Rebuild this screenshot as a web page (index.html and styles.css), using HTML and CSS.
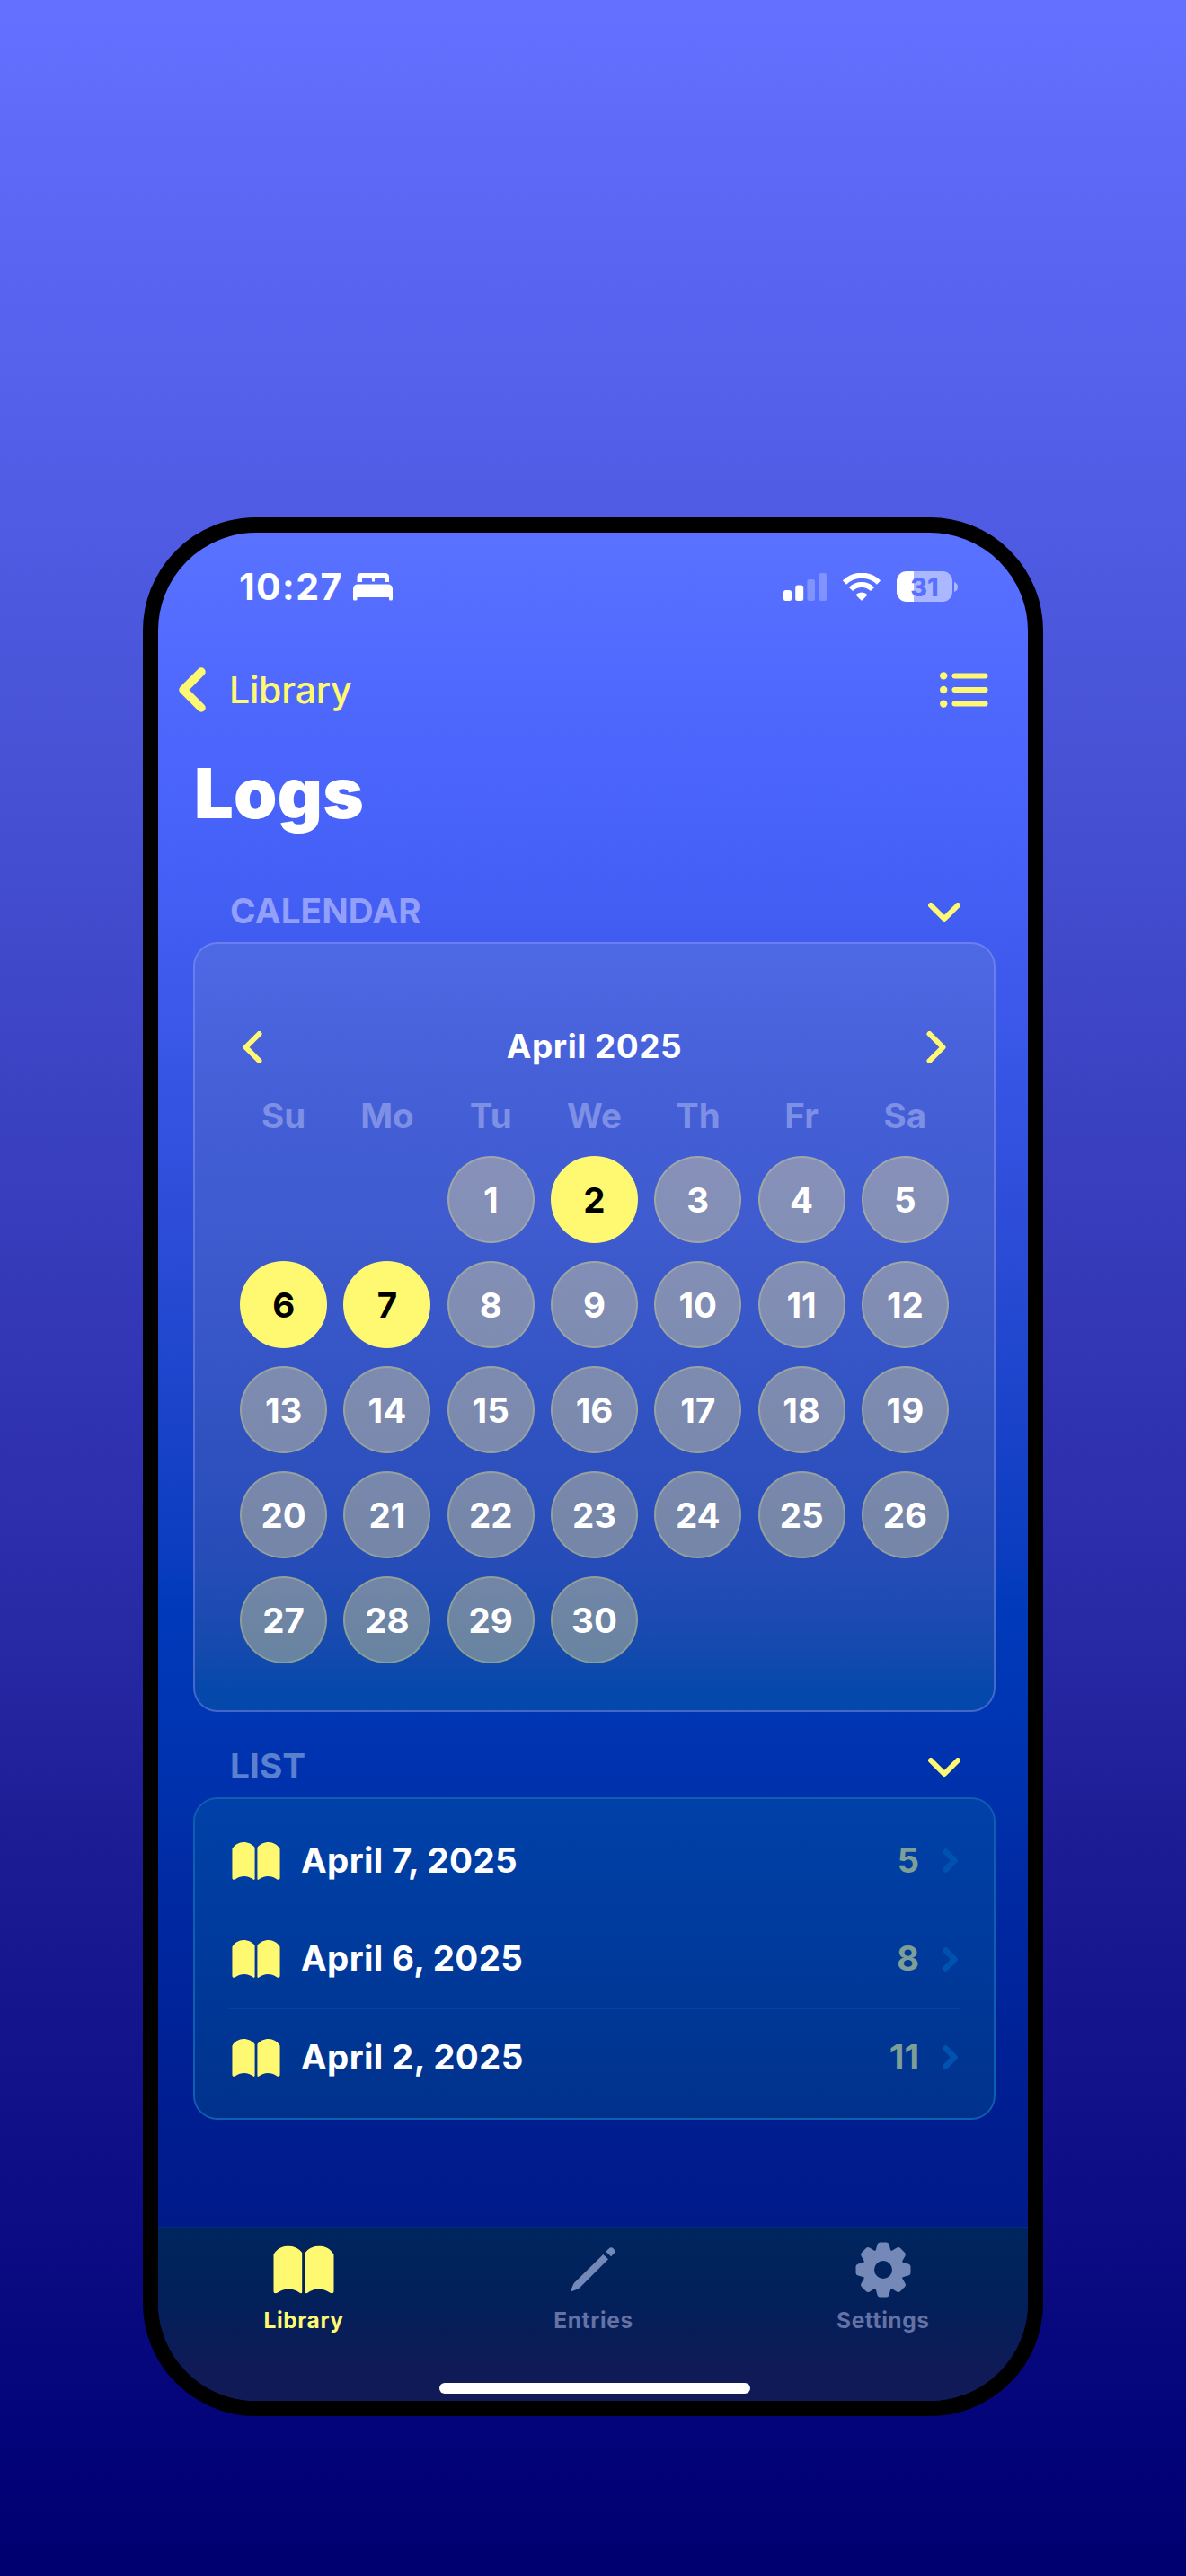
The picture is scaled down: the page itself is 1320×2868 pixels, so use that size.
FILE: index.html
```html
<!DOCTYPE html>
<html lang="en">
<head>
<meta charset="utf-8">
<title>Logs</title>
<link rel="stylesheet" href="styles.css">
</head>
<body>
<svg class="defs" width="0" height="0">
  <symbol id="book" viewBox="0 0 68 53">
    <path d="M0.5 9.5C4 3.500 10 0 16.500 0 23 0 28.500 2.800 32.200 7.500V51.500C32.200 52.800 31 53.300 30 52.500 26 49.500 22 48 17.500 48 13 48 9 49.500 5 52 3 53.400 0.500 52.900 0.500 50.500ZM35.800 7.500C39.500 2.800 45 0 51.500 0 58 0 64 3.500 67.500 9.500V50.500C67.500 52.900 65 53.400 63 52 59 49.500 55 48 50.500 48 46 48 42 49.500 38 52.500 37 53.300 35.800 52.800 35.800 51.500Z"/>
  </symbol>
  <symbol id="down" viewBox="0 0 36 22"><path d="M3 3 18 18 33 3" fill="none" stroke="currentColor" stroke-width="6" stroke-linecap="round" stroke-linejoin="round"/></symbol>
</svg>
<div class="phone">
  <header class="status">
    <div class="clock">
      <span class="time">10:27</span>
      <svg width="44" height="31" viewBox="0 0 44 31" fill="#fff"><path d="M4.500 10V4.500Q4.500 0 9 0H35.500Q40 0 40 4.500V10H35V7Q35 5 33 5H26Q24 5 24 7V9.500H21V7Q21 5 19 5H12Q10 5 10 7V10ZM0 18Q0 12.500 5.500 12.500H38.500Q44 12.500 44 18V29Q44 30.500 42.500 30.500H41.500Q40 30.500 40 29V27H4.500V29Q4.500 30.500 3 30.500H1.500Q0 30.500 0 29Z"/></svg>
    </div>
    <div class="indicators">
      <svg width="48" height="31" viewBox="0 0 48 31" fill="#fff"><rect y="19" width="9" height="12" rx="2.500"/><rect x="13.200" y="13.500" width="9" height="17.500" rx="2.500"/><g opacity=".25"><rect x="26.400" y="7" width="8.600" height="24" rx="2.500"/><rect x="39.500" width="8.500" height="31" rx="2.500"/></g></svg>
      <svg class="wifi" width="42" height="31" viewBox="0 0 42 31"><g fill="none" stroke="#fff" stroke-width="6"><path d="M2 10.500A27 27 0 0 1 40 10.500"/><path d="M9 18A17 17 0 0 1 33 18"/></g><path d="M14.300 24.300A9.500 9.500 0 0 1 27.700 24.300L22 30Q21 31 20 30Z" fill="#fff"/></svg>
      <div class="battery"><span class="level">31</span></div>
      <svg class="nub" width="4" height="11" viewBox="0 0 4 11"><path d="M0 0Q4 1.500 4 5.500T0 11Z" fill="#fff" opacity=".5"/></svg>
    </div>
  </header>
  <nav class="nav">
    <a class="back">
      <svg width="30" height="50" viewBox="0 0 30 50"><path d="M25 5 5 25 25 45" fill="none" stroke="currentColor" stroke-width="9.500" stroke-linecap="round" stroke-linejoin="round"/></svg>
      <span>Library</span>
    </a>
    <svg width="54" height="40" viewBox="0 0 54 40" fill="currentColor"><circle cx="4.200" cy="4.400" r="4.200"/><circle cx="4.200" cy="20" r="4.200"/><circle cx="4.200" cy="35.600" r="4.200"/><g><rect x="13.500" y="1.400" width="40" height="6" rx="3"/><rect x="13.500" y="17" width="40" height="6" rx="3"/><rect x="13.500" y="32.600" width="40" height="6" rx="3"/></g></svg>
  </nav>
  <h1>Logs</h1>

  <div class="section"><h2>CALENDAR</h2><svg width="36" height="22"><use href="#down"/></svg></div>
  <section class="card calendar">
    <div class="month">
      <svg width="22" height="36" viewBox="0 0 22 36"><path d="M18.500 3 3.500 18 18.500 33" fill="none" stroke="currentColor" stroke-width="6" stroke-linecap="round" stroke-linejoin="round"/></svg>
      <h3>April 2025</h3>
      <svg width="22" height="36" viewBox="0 0 22 36"><path d="M3.500 3 18.500 18 3.500 33" fill="none" stroke="currentColor" stroke-width="6" stroke-linecap="round" stroke-linejoin="round"/></svg>
    </div>
    <div class="weekdays"><span>Su</span><span>Mo</span><span>Tu</span><span>We</span><span>Th</span><span>Fr</span><span>Sa</span></div>
    <div class="days">
      <i></i><i></i><b>1</b><b class="on">2</b><b>3</b><b>4</b><b>5</b>
      <b class="on">6</b><b class="on">7</b><b>8</b><b>9</b><b>10</b><b>11</b><b>12</b>
      <b>13</b><b>14</b><b>15</b><b>16</b><b>17</b><b>18</b><b>19</b>
      <b>20</b><b>21</b><b>22</b><b>23</b><b>24</b><b>25</b><b>26</b>
      <b>27</b><b>28</b><b>29</b><b>30</b>
    </div>
  </section>

  <div class="section list-head"><h2>LIST</h2><svg width="36" height="22"><use href="#down"/></svg></div>
  <section class="card list">
    <div class="row"><svg class="book" width="54" height="42"><use href="#book"/></svg><span class="date">April 7, 2025</span><span class="count">5</span><svg class="go" width="17" height="27" viewBox="0 0 17 27"><path d="M3.500 3.500 13.500 13.500 3.500 23.500"/></svg></div>
    <div class="row"><svg class="book" width="54" height="42"><use href="#book"/></svg><span class="date">April 6, 2025</span><span class="count">8</span><svg class="go" width="17" height="27" viewBox="0 0 17 27"><path d="M3.500 3.500 13.500 13.500 3.500 23.500"/></svg></div>
    <div class="row"><svg class="book" width="54" height="42"><use href="#book"/></svg><span class="date">April 2, 2025</span><span class="count">11</span><svg class="go" width="17" height="27" viewBox="0 0 17 27"><path d="M3.500 3.500 13.500 13.500 3.500 23.500"/></svg></div>
  </section>

  <footer class="tabs">
    <div class="tab active"><svg width="68" height="62" viewBox="0 0 68 62"><use href="#book" y="4.500" width="68" height="53"/></svg><span>Library</span></div>
    <div class="tab"><svg width="50" height="62" viewBox="0 0 50 62"><path d="M36.300 14 42 19.300 10.800 50.500Q9.500 51.800 7.500 52.800L1.500 55Q0 55.300 .3 53.800L3 47.500Q3.700 46 5 44.800ZM39.300 10.800 43 7.200Q45.300 5.200 48 7.700 50.500 10.300 48.500 12.800L45 16.300Z"/></svg><span>Entries</span></div>
    <div class="tab"><svg width="62" height="62" viewBox="-31 -31 62 62"><g id="teeth"><path id="tooth" d="M-11-19Q-9-20-8-22.500L-6.600-28Q-5.800-30.500-3.500-30.500H3.500Q5.800-30.500 6.600-28L8-22.500Q9-20 11-19Z"/><use href="#tooth" transform="rotate(45)"/><use href="#tooth" transform="rotate(90)"/><use href="#tooth" transform="rotate(135)"/><use href="#tooth" transform="rotate(180)"/><use href="#tooth" transform="rotate(225)"/><use href="#tooth" transform="rotate(270)"/><use href="#tooth" transform="rotate(315)"/></g><circle r="16" fill="none" stroke="currentColor" stroke-width="12"/></svg><span>Settings</span></div>
    <div class="home"></div>
  </footer>
</div>
</body>
</html>
```
FILE: styles.css
```css
* { box-sizing: border-box; margin: 0; padding: 0; }
body {
  width: 1320px;
  height: 2868px;
  padding-top: 576px;
  overflow: hidden;
  font-family: Inter, "Liberation Sans", sans-serif;
  color: #fff;
  background: linear-gradient(#6470ff 0, #505ce4 560px, #4550d2 900px, #2b2ca9 1740px, #1a1b92 2100px, #0e0f86 2420px, #04047a 2700px, #000070 2868px);
}
svg { display: block; flex: none; }
.defs { position: absolute; }
.phone {
  width: 1002px;
  height: 2114px;
  margin: 0 auto;
  border: 17px solid #000;
  border-radius: 126px;
  overflow: hidden;
  display: flex;
  flex-direction: column;
  background: linear-gradient(#5a72ff 0, #4f69ff 170px, #4661f7 360px, #405cf0 460px, #2a4bd5 807px, #0a3cc0 1147px, #003bbb 1190px, #0031ad 1400px, #00279f 1560px, #001c8e 1800px, #001a8a 1887px);
}

.status { height: 120px; padding: 0 78px 0 90px; display: flex; justify-content: space-between; align-items: center; }
.clock, .indicators { display: flex; align-items: center; }
.clock { gap: 11px; }
.time { font-size: 41px; font-weight: 750; letter-spacing: 1.4px; }
.wifi { margin: 0 18px; }
.battery {
  width: 62px; height: 34px; border-radius: 11px;
  background: linear-gradient(90deg, #fff 19px, rgba(255,255,255,.5) 19px);
  display: flex; align-items: center; justify-content: center;
}
.level { font-size: 28.5px; font-weight: 800; color: #5770ff; }
.nub { margin-left: 2px; }

.nav { height: 109px; padding: 0 44px 0 23px; display: flex; justify-content: space-between; align-items: center; color: #fff971; }
.back { display: flex; align-items: center; gap: 26px; font-size: 41px; font-weight: 520; letter-spacing: -.2px; }
h1 { height: 122px; line-height: 122px; padding-left: 40px; font-size: 77.5px; font-weight: 900; letter-spacing: .3px; }

.section { height: 105px; padding: 35px 75px 0 80px; display: flex; align-items: center; justify-content: space-between; color: #fff971; }
.section svg { margin-top: 4px; }
h2 { font-size: 38.7px; font-weight: 650; letter-spacing: .1px; color: #929ffb; }
.list-head { height: 95px; padding-top: 24px; }
.list-head h2 { color: #5b80cf; }

.card { margin: 0 36px 0 39px; border: 2px solid; border-radius: 27px; background-clip: padding-box; }
.calendar {
  height: 857px; padding: 84px 41px 0;
  border-color: rgba(170,180,240,.4);
  background-image: linear-gradient(#4e69e4, #4660d8 150px, #3d5acd 350px, #264cb8 690px, #164aae 780px, #0448ac 835px);
}
.month { height: 61px; padding: 0 12px; display: flex; align-items: center; justify-content: space-between; color: #fff971; }
h3 { font-size: 37px; line-height: 44px; margin-top: -1px; font-weight: 750; letter-spacing: .5px; color: #fff; }
.weekdays, .days { display: grid; grid-template-columns: repeat(7, 1fr); justify-items: center; }
.weekdays { height: 91px; align-items: center; font-size: 38.5px; font-weight: 650; color: #7e8fe6; }
.days { grid-auto-rows: 97px; row-gap: 20px; }
.days b {
  width: 97px; height: 97px; border-radius: 50%;
  display: flex; align-items: center; justify-content: center;
  font-size: 38.5px; font-weight: 650;
  background: rgba(252,233,140,.37);
  border: 2px solid rgba(255,249,113,.22);
}
.days .on { background: #fff971; border-color: #fff971; color: #000; }

.list { height: 359px; padding: 14px 38px; border-color: #0e5fb2; background-image: linear-gradient(#0041a9, #00328c); }
.row { height: 109.3px; padding: 0 2px 0 3px; display: flex; align-items: center; }
.row + .row { border-top: 1px solid #00489f; }
.book { fill: #fff971; }
.date, .count { font-size: 38.5px; line-height: 46px; margin-top: -2px; font-weight: 650; }
.date { margin-left: 23px; flex: 1; letter-spacing: .35px; }
.count { color: #7d9f98; margin-right: 26px; }
.go path { fill: none; stroke: #0052b0; stroke-width: 6.500; stroke-linecap: round; stroke-linejoin: round; }

.tabs {
  position: relative; margin-top: auto; height: 194px; padding: 15px 0 0 1px;
  border-top: 2px solid #002f80; display: grid; grid-template-columns: repeat(3, 1fr); align-items: start;
  background: linear-gradient(#00255e, #02205a 80px, #101a56 160px);
}
.tab { display: flex; flex-direction: column; align-items: center; font-size: 24.500px; font-weight: 650; letter-spacing: .6px; color: #7589b8; }
.tab svg { fill: currentColor; }
.tab span { margin-top: 9px; line-height: 32px; color: #6472a5; }
.tab.active, .tab.active span { color: #fff971; }
.home { position: absolute; left: 313px; bottom: 8px; width: 346px; height: 12px; border-radius: 6px; background: #fff; }
```
